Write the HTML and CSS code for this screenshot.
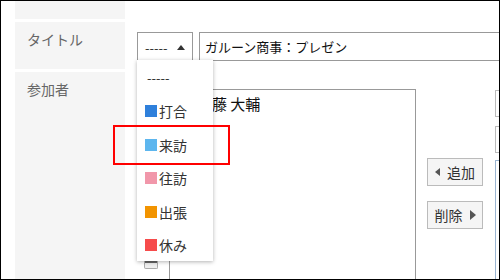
FILE: index.html
```html
<!doctype html>
<html lang="ja">
  <head>
    <meta charset="UTF-8" />
    <title>予定の登録</title>
    <link rel="stylesheet" href="styles.css">
  </head>
  <body>
    <div class="frame">
      <div class="row row-top">
        <div class="label"></div>
        <div class="field"></div>
      </div>

      <div class="row row-title">
        <div class="label">タイトル</div>
        <div class="field">
          <div class="menu-select">
            <span>-----</span>
            <span class="arrow-up"></span>
          </div>
          <div class="title-input">ガルーン商事：プレゼン</div>
        </div>
      </div>

      <div class="row row-members">
        <div class="label">参加者</div>
        <div class="field">
          <div class="member-list">
            <div class="member">藤 大輔</div>
            <span class="order-btn"></span>
          </div>
          <div class="member-buttons">
            <button class="move-btn"><span class="tri-left"></span>追加</button>
            <button class="move-btn">削除<span class="tri-right"></span></button>
          </div>
          <div class="candidates">
            <div class="cand-box"></div>
            <div class="cand-box"></div>
            <div class="cand-list"></div>
          </div>
        </div>
      </div>

      <!-- open dropdown of the menu select -->
      <ul class="dropdown">
        <li>-----</li>
        <li><span class="swatch" style="background:#2f80db"></span>打合</li>
        <li><span class="swatch" style="background:#5db6ee"></span>来訪</li>
        <li><span class="swatch" style="background:#f197aa"></span>往訪</li>
        <li><span class="swatch" style="background:#f29400"></span>出張</li>
        <li><span class="swatch" style="background:#f64b4b"></span>休み</li>
      </ul>

      <div class="highlight"></div>
    </div>
  </body>
</html>
```

FILE: styles.css
```css
body {
  margin: 0;
  font-family: "Noto Sans CJK JP", "Noto Sans", sans-serif;
  background-color: white;
  color: #222;
}

.frame {
  position: relative;
  width: 500px;
  height: 280px;
  box-sizing: border-box;
  border: 1px solid #000;
  overflow: hidden;
  display: flex;
  flex-direction: column;
  gap: 3px;
  padding-left: 14px;
}

.row {
  display: flex;
  flex-shrink: 0;
}

.row-top {
  height: 18px;
}

.row-title {
  height: 47px;
}

.row-members {
  flex: 1;
  min-height: 0;
}

.label {
  width: 110px;
  flex-shrink: 0;
  background-color: #f5f5f5;
  color: #666;
  font-size: 14px;
  padding: 7px 0 0 12px;
  box-sizing: border-box;
}

.field {
  flex: 1;
  display: flex;
  align-items: flex-start;
}

.row-title .field {
  padding: 10px 0 0 12px;
  gap: 6px;
}

.menu-select {
  width: 56px;
  height: 29px;
  box-sizing: border-box;
  border: 1px solid #999;
  display: flex;
  align-items: center;
  justify-content: space-between;
  padding: 2px 7px 0 7px;
  font-size: 13px;
  color: #333;
}

.arrow-up {
  width: 0;
  height: 0;
  border-left: 4px solid transparent;
  border-right: 4px solid transparent;
  border-bottom: 5px solid #333;
}

.title-input {
  width: 320px;
  height: 29px;
  box-sizing: border-box;
  border: 1px solid #999;
  padding: 4px 0 0 5px;
  font-size: 13px;
  color: #111;
  flex-shrink: 0;
}

.row-members .field {
  padding: 17px 0 0 44px;
}

.member-list {
  position: relative;
  width: 247px;
  height: 200px;
  box-sizing: border-box;
  border: 1px solid #999;
  flex-shrink: 0;
}

.member {
  font-size: 15px;
  color: #111;
  padding: 3px 0 0 42px;
}

.order-btn {
  position: absolute;
  left: -26px;
  top: 170px;
  width: 14px;
  height: 9px;
  box-sizing: border-box;
  border: 1px solid #aaa;
  border-radius: 2px;
  background-color: #eee;
  border-top: 3px solid #666;
}

.member-buttons {
  display: flex;
  flex-direction: column;
  gap: 15px;
  margin: 69px 0 0 11px;
}

.move-btn {
  width: 56px;
  height: 28px;
  box-sizing: border-box;
  border: 1px solid #bbb;
  background-color: #f5f5f5;
  font-family: inherit;
  font-size: 14px;
  color: #333;
  padding: 0;
  display: flex;
  align-items: center;
  justify-content: center;
  gap: 7px;
}

.tri-left {
  width: 0;
  height: 0;
  border-top: 4px solid transparent;
  border-bottom: 4px solid transparent;
  border-right: 5px solid #555;
}

.tri-right {
  width: 0;
  height: 0;
  border-top: 5px solid transparent;
  border-bottom: 5px solid transparent;
  border-left: 6px solid #555;
}

.candidates {
  margin-left: 12px;
  display: flex;
  flex-direction: column;
  gap: 9px;
  margin-top: 1px;
  flex-shrink: 0;
}

.cand-box {
  width: 30px;
  height: 27px;
  box-sizing: border-box;
  border: 1px solid #bbb;
}

.cand-list {
  width: 30px;
  height: 130px;
  box-sizing: border-box;
  border: 1px solid #9ab4d0;
  margin-top: -2px;
}

.dropdown {
  position: absolute;
  left: 136px;
  top: 59px;
  width: 76px;
  height: 201px;
  margin: 0;
  padding: 1px 0 0 0;
  list-style: none;
  background-color: white;
  box-shadow: 0 1px 4px rgba(0, 0, 0, 0.3);
  box-sizing: border-box;
}

.dropdown li {
  height: 33.5px;
  display: flex;
  align-items: center;
  padding-left: 8px;
  font-size: 14px;
  color: #333;
  gap: 2px;
}

.dropdown li:first-child {
  padding-left: 10px;
  font-size: 13px;
}

.swatch {
  width: 12px;
  height: 12px;
  display: inline-block;
}

.highlight {
  position: absolute;
  left: 112px;
  top: 124px;
  width: 117px;
  height: 40px;
  box-sizing: border-box;
  border: 2px solid #f00;
}
```
